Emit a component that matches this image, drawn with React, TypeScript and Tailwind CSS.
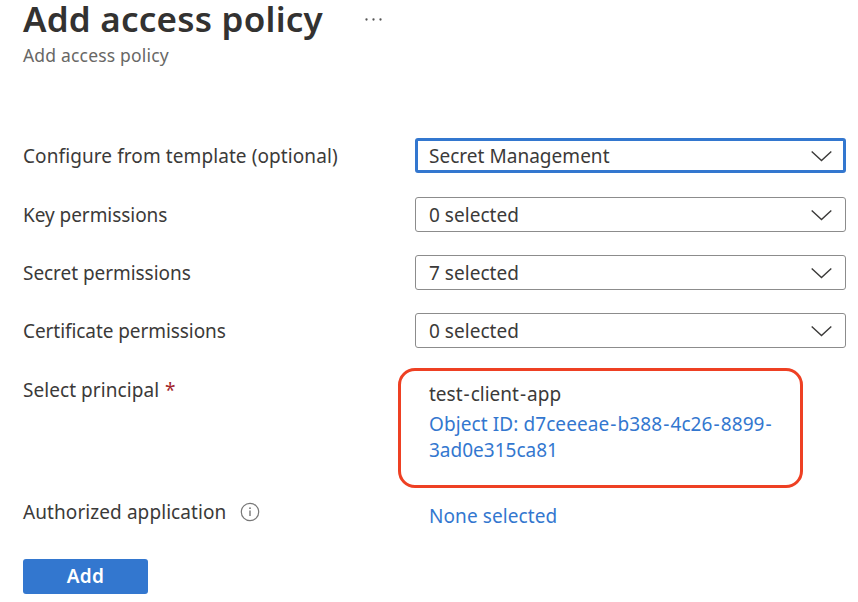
import React from "react";

type SelectProps = { label: string; value: string; labelClass?: string; active?: boolean };

function SelectRow({ label, value, labelClass = "", active = false }: SelectProps) {
  return (
    <div className="flex h-[35px] items-center">
      <label className={`w-[392px] shrink-0 whitespace-nowrap pt-px ${labelClass}`}>{label}</label>
      <div
        className={`flex h-[35px] w-[431px] shrink-0 items-center justify-between rounded-[3px] ${
          active ? "border-[3px] border-[#3377cf] pl-[11px] pr-[11px]" : "border-[1.5px] border-[#8c8c8c] pl-[13px] pr-[13px]"
        }`}
      >
        <span className="pt-px tracking-[0.03px]">{value}</span>
        <svg width="21" height="13" viewBox="0 0 21 13" fill="none" stroke="#3b3a39" strokeWidth="1.4">
          <path d="M0.7 2.6 10.5 11.6l9.8-9" />
        </svg>
      </div>
    </div>
  );
}

// Sets an identifier with slightly wider hyphens.
function Hyphenated({ text }: { text: string }) {
  const parts = text.split("-");
  return (
    <>
      {parts.map((part, i) => (
        <React.Fragment key={i}>
          {part}
          {i < parts.length - 1 && <span className="mx-px">-</span>}
        </React.Fragment>
      ))}
    </>
  );
}

export default function App() {
  return (
    <main className="h-[602px] w-[858px] overflow-hidden bg-white pl-[23px] font-['Noto_Sans','Open_Sans',sans-serif] text-[19px] leading-[26px] text-[#3b3a39]">
      <header className="flex h-[138.4px] flex-col">
        <div className="flex h-[40px] items-start">
          <h1 className="w-[342px] whitespace-nowrap text-[35px] font-semibold leading-[37px] tracking-[0.22px] text-[#333231]">
            Add access policy
          </h1>
          <svg width="18" height="3" viewBox="0 0 18 3" fill="#555" className="mt-[18px] shrink-0">
            <circle cx="1.5" cy="1.5" r="1.15" />
            <circle cx="8.5" cy="1.5" r="1.15" />
            <circle cx="15.5" cy="1.5" r="1.15" />
          </svg>
        </div>
        <p className="mt-px text-[17.5px] leading-[28px] tracking-[0.18px] text-[#686765]">Add access policy</p>
      </header>

      <section className="flex flex-col gap-[23.33px]">
        <SelectRow label="Configure from template (optional)" value="Secret Management" labelClass="tracking-[0.09px]" active />
        <SelectRow label="Key permissions" value="0 selected" labelClass="tracking-[-0.05px]" />
        <SelectRow label="Secret permissions" value="7 selected" labelClass="tracking-[-0.05px]" />
        <SelectRow label="Certificate permissions" value="0 selected" labelClass="tracking-[-0.07px]" />
      </section>

      <section className="mt-[19.6px] flex h-[120px]">
        <div className="w-[375px] shrink-0 pt-[9px] tracking-[0.06px]">
          Select principal <span className="ml-px text-[#a4262c]">*</span>
        </div>
        <div className="h-[120px] w-[405px] shrink-0 rounded-[17px] border-[3px] border-[#ee4023] pl-[28px] pt-[10px]">
          <p>
            <Hyphenated text="test-client-app" />
          </p>
          <p className="mt-[4px] whitespace-nowrap text-[#3377cf]">
            <span className="tracking-[0.09px]">
              Object ID: <Hyphenated text="d7ceeeae-b388-4c26-8899-" />
            </span>
            <br />
            3ad0e315ca81
          </p>
        </div>
      </section>

      <section className="mt-[11px] flex h-[60px]">
        <div className="flex w-[406px] shrink-0 items-start gap-[14px]">
          <span className="tracking-[0.08px]">Authorized application</span>
          <svg width="20" height="20" viewBox="0 0 20 20" fill="none" stroke="#777" className="mt-[3px]">
            <circle cx="10" cy="10" r="8.7" strokeWidth="1.2" />
            <path d="M10 8.5v5.5" strokeWidth="1.4" />
            <circle cx="10" cy="6.2" r="0.9" fill="#777" stroke="none" />
          </svg>
        </div>
        <a className="pt-[4px] tracking-[0.09px] text-[#3377cf]">None selected</a>
      </section>

      <button className="flex h-[35px] w-[125px] items-center justify-center rounded-[3px] bg-[#3377cf] text-[19px] font-semibold tracking-[0.3px] text-white">
        Add
      </button>
    </main>
  );
}
